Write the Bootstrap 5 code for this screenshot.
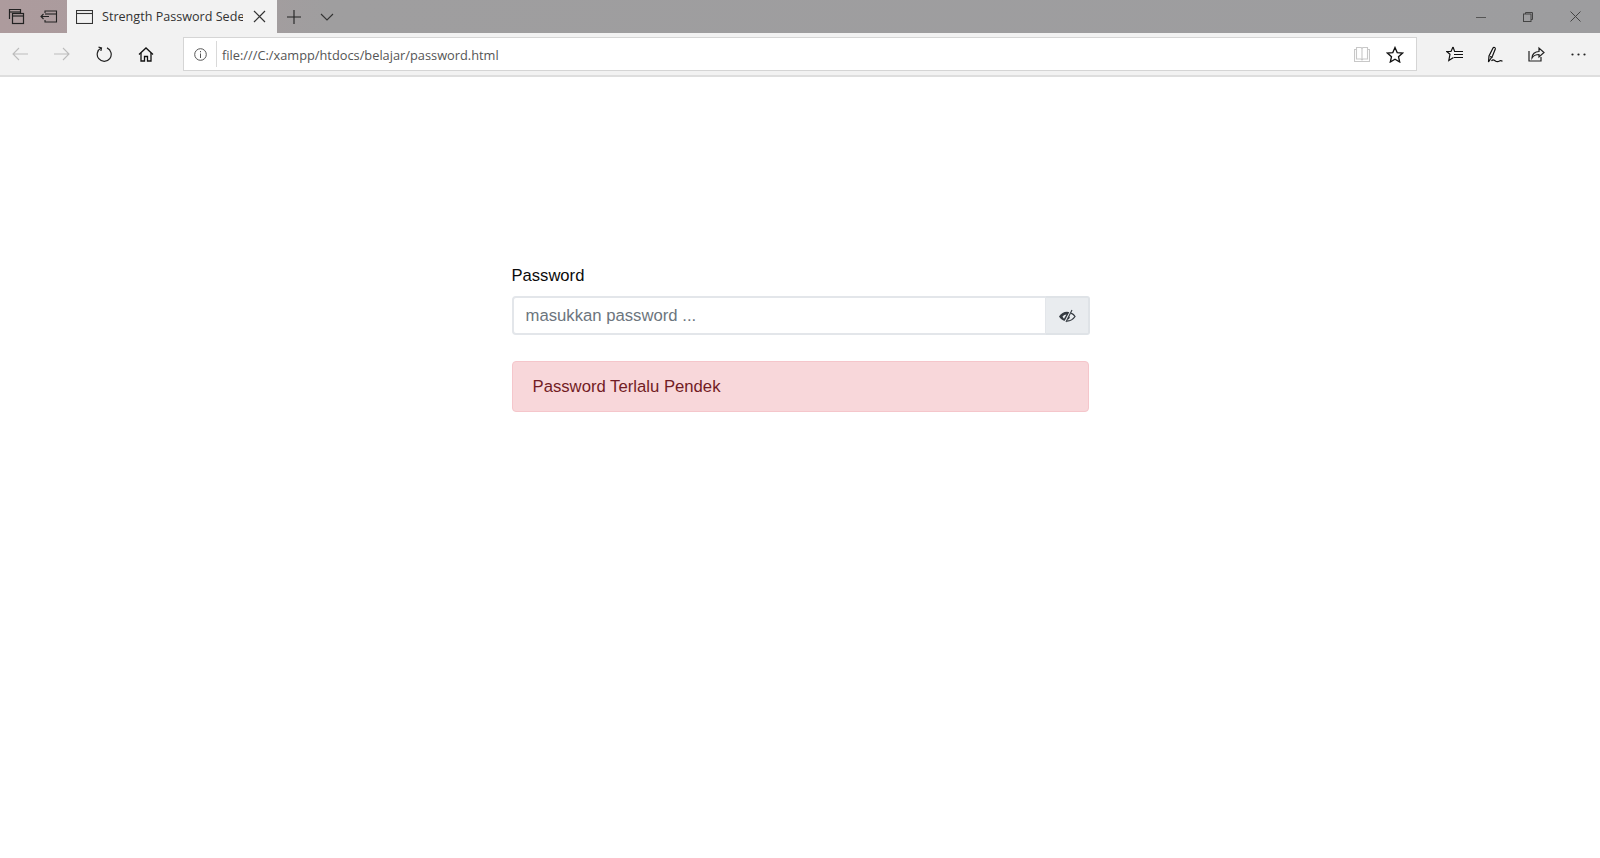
<!DOCTYPE html>
<html lang="id">
<head>
<meta charset="utf-8">
<title>Strength Password Sedehana</title>
<link href="https://cdn.jsdelivr.net/npm/bootstrap@5.3.0/dist/css/bootstrap.min.css" rel="stylesheet">
<style>
html,body{height:100%;overflow:hidden;background:#fff}
.ui-font{font-family:"Open Sans","Noto Sans",sans-serif}
.tabbar{height:33px;background:linear-gradient(90deg,#ad9b9d 0,#a89c9e 180px,#9f9e9f 330px,#9d9d9f 100%)}
.tab-leading{width:67px;height:33px;gap:15px;padding-left:8px}
.tab-active{width:210px;height:33px;background:#f2f2f2;padding:0 11px 0 9px;color:#333;font-size:12.6px}
.tab-title{width:141px;margin-left:9px;white-space:nowrap;overflow:hidden;padding-top:2px}
.tab-extra{gap:19px;padding-left:10px}
.win-btns{gap:37px;padding-right:19px}
.toolbar{height:44px;background:#f2f2f2;border-bottom:2px solid #dedede}
.nav-cluster{width:183px;padding-left:12px;gap:26px}
.addr{width:1234px;height:34px;background:#fff;border:1px solid #d5d5d5;font-size:12.8px;color:#555}
.addr-info{width:33px;height:26px;border-right:1px solid #d9d9d9}
.addr-url{padding-left:5px;padding-top:4px}
.addr-end{gap:16px;padding-right:12px}
.tools{gap:24px;padding-left:29px}
.tools-dots{margin-left:2px}
.ico{display:block;flex:none}
.pw-wrap{width:577px;margin:0 auto;padding-top:187px;font-family:"Liberation Sans",Arial,sans-serif;font-size:16.6px}
.pw-label{color:#0b0b0b;margin-bottom:8px;line-height:24px;display:block}
.pw-input{height:39px;font-size:16.7px;padding:0 12px;border:2px solid #e3e6ea;border-right-width:1px;border-radius:4px 0 0 4px}
.pw-input::placeholder{color:#6c757d;opacity:1}
.pw-eye{width:45px;height:39px;margin-right:-1px;background:#e9ecef;border:2px solid #dfe3e7;border-left:1px solid #ced4da;border-radius:0 3px 3px 0}
.pw-alert{height:51px;margin-top:26px;padding:0 20px;background:#f8d7da;border:1px solid #f5c6cb;color:#721c24;font-size:16.7px;border-radius:4px}
</style>
</head>
<body>
<header class="ui-font">
  <div class="tabbar d-flex align-items-center justify-content-between">
    <div class="d-flex align-items-center">
      <div class="tab-leading d-flex align-items-center">
        <svg class="ico" width="17" height="17" viewBox="0 0 17 17" fill="none" stroke="#222" stroke-width="1.2"><path d="M1.500 11V1.500h11V5"/><path d="M1.500 4h11"/><rect x="4.500" y="5.500" width="11" height="10"/><path d="M4.500 8h11"/></svg>
        <svg class="ico" width="18" height="17" viewBox="0 0 18 17" fill="none" stroke="#222" stroke-width="1.100"><path d="M5 5V3h11.500v11H5v-2"/><path d="M5 6h11.500"/><path d="M1 8.500h8M3.500 6 1 8.500 3.500 11"/></svg>
      </div>
      <div class="tab-active d-flex align-items-center">
        <svg class="ico" width="17" height="14" viewBox="0 0 17 14" fill="none" stroke="#333" stroke-width="1.100"><rect x=".5" y=".5" width="16" height="13"/><path d="M.5 3.500h16"/></svg>
        <span class="tab-title">Strength Password Sedehana</span>
        <svg class="ico ms-auto" width="13" height="13" viewBox="0 0 13 13" stroke="#333" stroke-width="1.200"><path d="M1 1l11 11M12 1 1 12"/></svg>
      </div>
      <div class="tab-extra d-flex align-items-center">
        <svg class="ico" width="14" height="14" viewBox="0 0 14 14" stroke="#222" stroke-width="1.100"><path d="M7 0v14M0 7h14"/></svg>
        <svg class="ico" width="14" height="8" viewBox="0 0 14 8" fill="none" stroke="#333" stroke-width="1.100"><path d="M1 1l6 6 6-6"/></svg>
      </div>
    </div>
    <div class="win-btns d-flex align-items-center">
      <svg class="ico" width="10" height="10" viewBox="0 0 10 10" stroke="#555"><path d="M0 5.500h10"/></svg>
      <svg class="ico" width="10" height="10" viewBox="0 0 10 10" fill="none" stroke="#444"><rect x=".5" y="2" width="7.500" height="7.500"/><path d="M2.500 2V.5h7v7H8"/></svg>
      <svg class="ico" width="11" height="11" viewBox="0 0 11 11" stroke="#444"><path d="M.5.5l10 10M10.500.5l-10 10"/></svg>
    </div>
  </div>
  <div class="toolbar d-flex align-items-center">
    <div class="nav-cluster d-flex align-items-center">
      <svg class="ico" width="16" height="14" viewBox="0 0 16 14" fill="none" stroke="#bcbcbc" stroke-width="1.100"><path d="M16 7H1M7 1 1 7l6 6"/></svg>
      <svg class="ico" width="16" height="14" viewBox="0 0 16 14" fill="none" stroke="#bcbcbc" stroke-width="1.100"><path d="M0 7h15M9 1l6 6-6 6"/></svg>
      <svg class="ico" width="16" height="16" viewBox="0 0 16 16" fill="none" stroke="#222" stroke-width="1.200"><path d="M5.200 2A7 7 0 1 0 11 1.900"/><path d="M2.500 1.200 5.500 2l-.6 3"/></svg>
      <svg class="ico" width="16" height="15" viewBox="0 0 16 15" fill="none" stroke="#111" stroke-width="1.300"><path d="M1 7.500 8 1l7 6.500"/><path d="M3 6v8h3.500V9.500h3V14H13V6"/></svg>
    </div>
    <div class="addr d-flex align-items-center">
      <div class="addr-info d-flex align-items-center justify-content-center">
        <svg class="ico" width="13" height="13" viewBox="0 0 13 13" fill="none" stroke="#555"><circle cx="6.500" cy="6.500" r="5.800"/><path d="M6.500 5.500V10M6.500 3v1.300"/></svg>
      </div>
      <span class="addr-url">file:///C:/xampp/htdocs/belajar/password.html</span>
      <div class="addr-end d-flex align-items-center ms-auto">
        <svg class="ico" width="16" height="15" viewBox="0 0 16 15" fill="none" stroke="#c8c8c8" stroke-width="1.100"><path d="M.5 2.500h2v-2h4.500L8 1.500l1-1h4.500v2h2V14.500H.5z"/><path d="M2.500 2.500v9.500H7l1 1 1-1h4.500V2.500M8 1.500V13"/></svg>
        <svg class="ico" width="18" height="17" viewBox="0 0 18 17" fill="none" stroke="#111" stroke-width="1.300"><path d="M9 1.500 11.200 6.600l5.400.5-4.100 3.600 1.200 5.300L9 13.200 4.300 16l1.200-5.300L1.400 7.100l5.400-.5z"/></svg>
      </div>
    </div>
    <div class="tools d-flex align-items-center">
      <svg class="ico" width="17" height="16" viewBox="0 0 17 16" fill="none" stroke="#111" stroke-width="1.200"><path d="M7 1 5 5.500H.7L4 8.300 2.800 14.500 7.500 11.500"/><path d="M7 1 8.500 5"/><path d="M8 5.500h9M8 8.500h9M8 11.500h9"/></svg>
      <svg class="ico" width="17" height="17" viewBox="0 0 17 17" fill="none" stroke="#111" stroke-width="1.200"><path d="M1.500 16 2 10 6 2c.7-1.300 2.800-.5 2.300 1L5.500 10 1.500 16z"/><path d="M3 10.500l2.500 1M4.500 15c1.500-2 2.500-1 3.500-.3 1.500 1.200 3 1.300 4.500.3.800-.5 1.500-.5 3 .2"/></svg>
      <svg class="ico" width="17" height="16" viewBox="0 0 17 16" fill="none" stroke="#222" stroke-width="1.200"><path d="M1 5v10h12v-4"/><path d="M4 12c0-4 3-6.500 7-6.500V2l5 4.500-5 4.500V8.500C8 8.500 5.500 9.500 4 12z"/></svg>
      <svg class="ico tools-dots" width="15" height="3" viewBox="0 0 15 3" fill="#222"><circle cx="1.500" cy="1.500" r="1.100"/><circle cx="7.500" cy="1.500" r="1.100"/><circle cx="13.500" cy="1.500" r="1.100"/></svg>
    </div>
  </div>
</header>
<main class="pw-wrap">
  <label class="pw-label" for="pw">Password</label>
  <div class="input-group flex-nowrap">
    <input id="pw" type="password" class="form-control pw-input" placeholder="masukkan password ...">
    <span class="pw-eye d-flex align-items-center justify-content-center">
      <svg class="ico" width="18" height="14" viewBox="0 0 18 14"><path fill="none" stroke="#343a40" stroke-width="1.300" d="M13 4.200C14.800 5 16.200 6.100 17 7.500c-1.800 2.800-4.800 4.500-8 4.500"/><path fill="#343a40" d="M1 7.500C3 4.400 5.800 2.800 9 2.800c1 0 2 .2 2.900.5L7.300 12C4.700 11.500 2.600 10 1 7.500z"/><path fill="#e9ecef" d="M4.500 7.500C5.600 6.300 7 5.600 8.500 5.500L6 9.800C5.400 9.200 4.900 8.400 4.500 7.500z"/><path stroke="#e9ecef" stroke-width="2" d="M13.300 1.500 7.500 12.500"/><path stroke="#343a40" stroke-width="1.100" d="M14 1 8 13M11.300 7.800c0 1-.5 1.700-1.200 2.100"/></svg>
    </span>
  </div>
  <div class="pw-alert d-flex align-items-center" role="alert">Password Terlalu Pendek</div>
</main>
<script src="https://cdn.jsdelivr.net/npm/bootstrap@5.3.0/dist/js/bootstrap.bundle.min.js"></script>
</body>
</html>
